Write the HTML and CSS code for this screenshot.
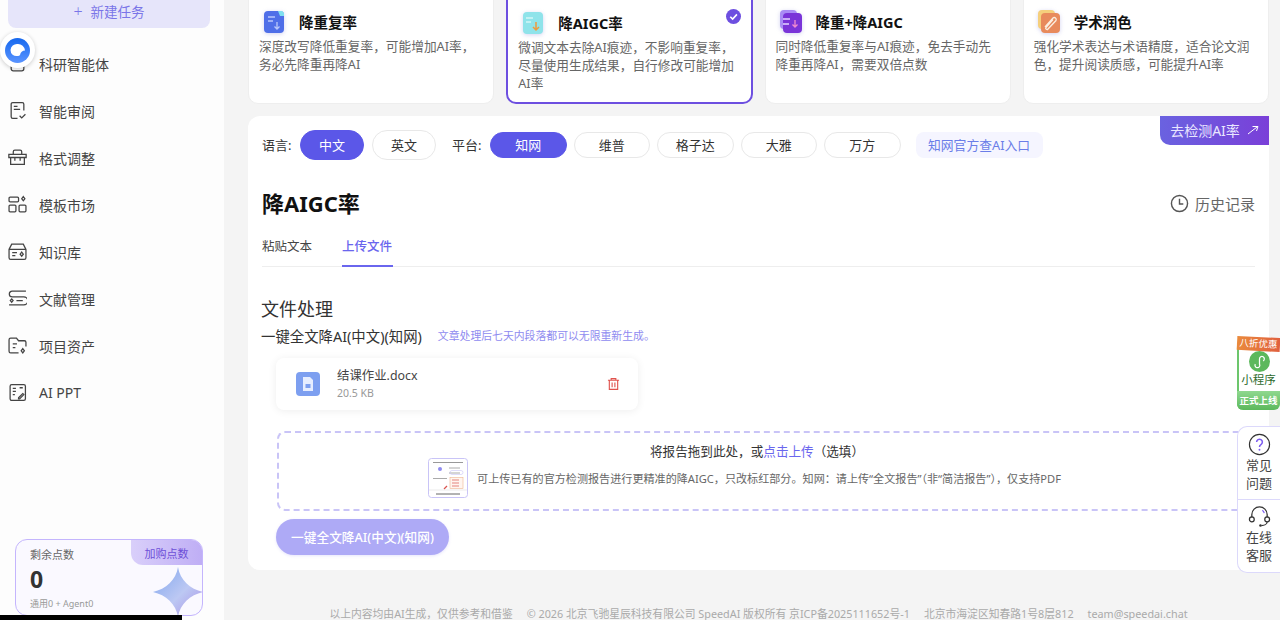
FILE: index.html
```html
<!DOCTYPE html>
<html lang="zh-CN">
<head>
    <meta charset="UTF-8">
    <meta name="viewport" content="width=device-width, initial-scale=1.0">
    <title>降AIGC率</title>
    <link rel="stylesheet" href="styles.css">
</head>
<body>
    <div class="app">
        <aside class="sidebar">
            <div class="new-task"><span class="plus">+</span>新建任务</div>
            <nav class="nav">
                <a class="nav-item">
                    <svg class="nav-icon" viewBox="0 0 18 18"><path d="M3 6h12v8a2 2 0 0 1-2 2H5a2 2 0 0 1-2-2zM1 6h16M6 10h6"/></svg>
                    科研智能体
                </a>
                <a class="nav-item">
                    <svg class="nav-icon" viewBox="0 0 18 18"><path d="M15 9V3a1.500 1.500 0 0 0-1.500-1.500H4.500A1.500 1.500 0 0 0 3 3v12a1.500 1.500 0 0 0 1.500 1.500H9M5.500 5h3.500M5.500 8h6M11 14l2 2 3.500-3.500"/></svg>
                    智能审阅
                </a>
                <a class="nav-item">
                    <svg class="nav-icon" viewBox="0 0 18 18"><path d="M5 6V3.500A1.500 1.500 0 0 1 6.500 2h5A1.500 1.500 0 0 1 13 3.500V6M.8 6h16.400v3H.8zM2.500 9v6.500h13V9M6.500 9v3M11.500 9v3"/></svg>
                    格式调整
                </a>
                <a class="nav-item">
                    <svg class="nav-icon" viewBox="0 0 18 18"><rect x="1" y="2" width="9" height="4.500" rx="1"/><rect x="1" y="9.500" width="6.500" height="6.500" rx="1"/><rect x="10.500" y="9.500" width="6.500" height="6.500" rx="1"/><path d="M14.500 1.500l1.500 2-1.500 2-1.500-2z"/></svg>
                    模板市场
                </a>
                <a class="nav-item">
                    <svg class="nav-icon" viewBox="0 0 18 18"><path d="M1 7l2.500-5h11L17 7v8a1.500 1.500 0 0 1-1.500 1.500h-13A1.500 1.500 0 0 1 1 15zM1 7h16M4 10h4.500M4 13h3M13 9.500l1.500 2-1.500 2-1.500-2z"/></svg>
                    知识库
                </a>
                <a class="nav-item">
                    <svg class="nav-icon" viewBox="0 0 18 18"><path d="M17 2H4a2.500 2.500 0 0 0 0 5.500h11a2.500 2.500 0 0 1 0 7.500H1M8 11h6M3.500 9.500l1.300 1.500-1.300 1.500L2.200 11z"/></svg>
                    文献管理
                </a>
                <a class="nav-item">
                    <svg class="nav-icon" viewBox="0 0 18 18"><path d="M10 16H2.500A1.500 1.500 0 0 1 1 14.500v-11A1.500 1.500 0 0 1 2.500 2H8l2 2.500h5.500A1.500 1.500 0 0 1 17 6v4M4.500 7.500h4M4.500 11h2.500M14 12l1.500 2-1.500 2-1.500-2z"/></svg>
                    项目资产
                </a>
                <a class="nav-item">
                    <svg class="nav-icon" viewBox="0 0 18 18"><rect x="2" y="1.500" width="14.500" height="15" rx="1.500"/><path d="M4.500 5h3M4.500 8h3M4.500 11h2M11 4.500h3M10 14l4-4 1 1-4 4h-1z"/></svg>
                    AI PPT
                </a>
            </nav>
            <div class="credits">
                <span class="buy-tag">加购点数</span>
                <div class="credits-label">剩余点数</div>
                <div class="credits-num">0</div>
                <div class="credits-sub">通用0 + Agent0</div>
                <svg class="credits-star" viewBox="0 0 50 50">
                    <defs>
                        <linearGradient id="starFill" x1="0" y1="0" x2="1" y2="1">
                            <stop offset="0" stop-color="#7fa6ee"/>
                            <stop offset="0.55" stop-color="#bcc8f3"/>
                            <stop offset="1" stop-color="#a88fe6"/>
                        </linearGradient>
                    </defs>
                    <path d="M25 0C27 13 37 22 50 25 37 28 27 37 25 50 23 37 13 28 0 25 13 22 23 13 25 0z" fill="url(#starFill)"/>
                </svg>
            </div>
        </aside>

        <main class="main">
            <section class="mode-grid">
                <div class="mode-card">
                    <div class="mode-head">
                        <svg class="mode-icon" viewBox="0 0 22 24"><rect x="1" y="1" width="20" height="22" rx="4" fill="#4f6fe8"/><path d="M15 1h4l2 2v3h-4z" fill="#7fe0f0"/><path d="M5 7h7M5 11h5" stroke="#b9c8fb" stroke-width="1.500"/><path d="M14 12v7M11.500 16.500l2.500 2.500 2.500-2.500" stroke="#b9c8fb" stroke-width="1.300" fill="none"/></svg>
                        <h3 class="mode-title">降重复率</h3>
                    </div>
                    <p class="mode-desc">深度改写降低重复率，可能增加AI率，务必先降重再降AI</p>
                </div>
                <div class="mode-card active">
                    <div class="mode-head">
                        <svg class="mode-icon" viewBox="0 0 22 24"><rect x="1" y="1" width="20" height="22" rx="4" fill="#8fe3ea"/><path d="M4 7h7M4 11h5" stroke="#d4f6f8" stroke-width="1.500"/><path d="M14 11v8M11 16l3 3 3-3" stroke="#ef9b3d" stroke-width="1.500" fill="none"/></svg>
                        <h3 class="mode-title">降AIGC率</h3>
                    </div>
                    <p class="mode-desc">微调文本去除AI痕迹，不影响重复率，尽量使用生成结果，自行修改可能增加AI率</p>
                    <svg class="mode-check" viewBox="0 0 14 14"><circle cx="7" cy="7" r="7" fill="#6d4fe0"/><path d="M4 7.200l2.200 2.200L10.200 5" stroke="#fff" stroke-width="1.500" fill="none"/></svg>
                </div>
                <div class="mode-card">
                    <div class="mode-head">
                        <svg class="mode-icon" viewBox="0 0 22 24"><rect x="0" y="0" width="17" height="19" rx="4" fill="#a98cf5"/><rect x="3" y="3" width="19" height="20" rx="4" fill="#7a34d8"/><path d="M3 9h7M3 14h6" stroke="#e3d6ff" stroke-width="1.500"/><path d="M15 10v7M12.500 14.500l2.500 2.500 2.500-2.500" stroke="#f18bd0" stroke-width="1.300" fill="none"/></svg>
                        <h3 class="mode-title">降重+降AIGC</h3>
                    </div>
                    <p class="mode-desc">同时降低重复率与AI痕迹，免去手动先降重再降AI，需要双倍点数</p>
                </div>
                <div class="mode-card">
                    <div class="mode-head">
                        <svg class="mode-icon" viewBox="0 0 22 24"><rect x="0" y="0" width="17" height="19" rx="4" fill="#f5cf7c"/><rect x="3" y="3" width="19" height="20" rx="4" fill="#e88a5c"/><path d="M7 17L15 8a2 2 0 0 1 3 2.500L10 19a1.200 1.200 0 0 1-2-1.500l7-8" stroke="#fbeee0" stroke-width="1.300" fill="none"/></svg>
                        <h3 class="mode-title">学术润色</h3>
                    </div>
                    <p class="mode-desc">强化学术表达与术语精度，适合论文润色，提升阅读质感，可能提升AI率</p>
                </div>
            </section>

            <section class="panel">
                <a class="detect-tag">去检测AI率
                    <svg class="detect-arrow" viewBox="0 0 12 10"><path d="M1 9l9-7M5.500 1.500H11L9.500 6" stroke="#fff" stroke-width="1" fill="none"/></svg>
                </a>
                <div class="filters">
                    <span class="filter-label">语言:</span>
                    <span class="pill pill-lg selected">中文</span>
                    <span class="pill pill-lg">英文</span>
                    <span class="filter-label platform-label">平台:</span>
                    <span class="pill selected">知网</span>
                    <span class="pill">维普</span>
                    <span class="pill">格子达</span>
                    <span class="pill">大雅</span>
                    <span class="pill">万方</span>
                    <a class="official-link">知网官方查AI入口</a>
                </div>
                <div class="title-row">
                    <h1 class="page-title">降AIGC率</h1>
                    <a class="history">
                        <svg class="history-icon" viewBox="0 0 20 20"><circle cx="10" cy="10" r="8.500"/><path d="M10 5v5.500h4"/></svg>
                        历史记录
                    </a>
                </div>
                <div class="tabs">
                    <span class="tab">粘贴文本</span>
                    <span class="tab active">上传文件</span>
                </div>
                <h2 class="section-title">文件处理</h2>
                <div class="subtitle-row">
                    <span class="subtitle">一键全文降AI(中文)(知网)</span>
                    <span class="hint">文章处理后七天内段落都可以无限重新生成。</span>
                </div>
                <div class="file-card">
                    <svg class="file-icon" viewBox="0 0 24 24"><rect width="24" height="24" rx="4" fill="#7d9ff0"/><path d="M7 5h7l3 3v11H7z" fill="#e6edff"/><rect x="9.500" y="12" width="5" height="4" fill="#7d9ff0"/></svg>
                    <div class="file-info">
                        <div class="file-name">结课作业.docx</div>
                        <div class="file-size">20.5 KB</div>
                    </div>
                    <svg class="trash" viewBox="0 0 14 14"><path d="M1 3h12M4.500 3V1.200h5V3M2.500 3v9.800h9V3M5.500 5.500v5M8.500 5.500v5"/></svg>
                </div>
                <div class="dropzone">
                    <div class="drop-title">将报告拖到此处，或<span class="drop-link">点击上传</span>（选填）</div>
                    <div class="drop-body">
                        <svg class="report-thumb" viewBox="0 0 40 40">
                            <rect x=".5" y=".5" width="39" height="39" rx="3" fill="#fff" stroke="#c9c4f7"/>
                            <path d="M5 4.500h30" stroke="#999"/>
                            <path d="M21 10h11M21 15h11M5 20.500h14" stroke="#aaa"/>
                            <rect x="22" y="12.500" width="13" height="4" rx="2" fill="none" stroke="#c9c4f7" stroke-width=".6"/>
                            <circle cx="12" cy="11" r="2" fill="#8f8bf0"/>
                            <rect x="22" y="19.500" width="13" height="11" fill="#fff5ef" stroke="#eeb48f" stroke-width=".6"/>
                            <path d="M24 22h7M24 25h7M24 28h7" stroke="#d9534f" stroke-width=".7"/>
                            <path d="M19 28l-3 3" stroke="#d9534f" stroke-width="1.200"/>
                            <path d="M1 32h38" stroke="#ddd" stroke-width=".6"/>
                            <path d="M8 36h24" stroke="#666"/>
                        </svg>
                        <span class="drop-desc">可上传已有的官方检测报告进行更精准的降AIGC，只改标红部分。知网：请上传“全文报告”（非“简洁报告”），仅支持PDF</span>
                    </div>
                </div>
                <button class="submit">一键全文降AI(中文)(知网)</button>
            </section>

            <footer class="footer">
                <span>以上内容均由AI生成，仅供参考和借鉴</span>
                <span>© 2026 北京飞驰星辰科技有限公司 SpeedAI 版权所有 京ICP备2025111652号-1</span>
                <span>北京市海淀区知春路1号8层812</span>
                <span>team@speedai.chat</span>
            </footer>
        </main>
    </div>

    <div class="float-logo">
        <svg class="float-logo-mark" viewBox="0 0 25 25">
            <defs>
                <linearGradient id="logoFill" x1="0" y1="0" x2="0" y2="1">
                    <stop offset="0" stop-color="#1668ee"/>
                    <stop offset="1" stop-color="#5a94ff"/>
                </linearGradient>
            </defs>
            <circle cx="12.500" cy="12.500" r="12.500" fill="url(#logoFill)"/>
            <path d="M12.500 6a7 7 0 0 1 7.500 6.500c-2.500 0-4.500 1.500-5 4.500-.5.800-1.500 1-2.500 1A6 6 0 0 1 5.500 12 6.500 6.500 0 0 1 12.500 6z" fill="#fff"/>
        </svg>
    </div>
    <div class="bottom-bar"></div>

    <div class="mini-app">
        <div class="mini-ribbon">八折优惠</div>
        <svg class="mini-icon" viewBox="0 0 20 20"><circle cx="10" cy="10" r="10" fill="#5cb85c"/><path d="M6 12.500a2.300 2.300 0 1 0 4 0V7.500a2.300 2.300 0 1 1 3.500 2" stroke="#fff" stroke-width="1.200" fill="none"/></svg>
        <div class="mini-text">小程序</div>
        <div class="mini-foot">正式上线</div>
    </div>

    <div class="help-box">
        <div class="help-item">
            <svg class="help-icon" viewBox="0 0 24 24"><circle cx="12" cy="12" r="10.500" fill="none" stroke="#333" stroke-width="1.200"/><path d="M9 9.500a3 3 0 1 1 4.500 2.600c-1 .6-1.500 1.100-1.500 2.400" fill="none" stroke="#7c5cf0" stroke-width="1.600"/><circle cx="12" cy="17.500" r="1" fill="#7c5cf0"/></svg>
            <span>常见<br>问题</span>
        </div>
        <div class="help-item">
            <svg class="help-icon" viewBox="0 0 24 24"><path d="M4 13V10a8 8 0 0 1 16 0v3" fill="none" stroke="#333" stroke-width="1.300"/><path d="M15 5.500a6 6 0 0 1 2 3" fill="none" stroke="#7c5cf0" stroke-width="1.200"/><circle cx="4" cy="15" r="2.500" fill="none" stroke="#333" stroke-width="1.300"/><circle cx="20" cy="15" r="2.500" fill="none" stroke="#333" stroke-width="1.300"/><path d="M20 17.500c0 2.500-3 4-6 4" fill="none" stroke="#333" stroke-width="1.300"/><circle cx="13" cy="21.500" r="1.300" fill="#333"/></svg>
            <span>在线<br>客服</span>
        </div>
    </div>
</body>
</html>
```

FILE: styles.css
```css
* {
    box-sizing: border-box;
}

html, body {
    margin: 0;
    padding: 0;
    height: 620px;
    overflow: hidden;
}

body {
    font-family: "Noto Sans", "Noto Sans CJK SC", sans-serif;
    background-color: #f4f4f4;
    color: #333;
    position: relative;
}

.app {
    display: flex;
    height: 620px;
}

/* sidebar */
.sidebar {
    width: 224px;
    flex-shrink: 0;
    background-color: #fdfdfd;
    display: flex;
    flex-direction: column;
    padding: 0 14px 4px 8px;
}

.new-task {
    height: 28px;
    padding-bottom: 6px;
    width: 202px;
    background-color: #e6e5fa;
    border-radius: 0 0 8px 8px;
    color: #7a75e8;
    font-size: 13.500px;
    display: flex;
    align-items: center;
    justify-content: center;
    flex-shrink: 0;
}

.plus {
    margin-right: 8px;
    font-size: 16px;
    font-weight: 300;
}

.nav {
    margin-top: 12px;
    display: flex;
    flex-direction: column;
}

.nav-item {
    height: 47px;
    display: flex;
    align-items: center;
    gap: 12px;
    font-size: 14px;
    color: #444;
}

.nav-icon {
    width: 19px;
    height: 19px;
    fill: none;
    stroke: #444;
    stroke-width: 1.200;
    flex-shrink: 0;
}

.credits {
    margin-top: auto;
    margin-left: 7px;
    width: 188px;
    height: 77px;
    border: 1px solid #c4b5fd;
    border-radius: 12px;
    background-color: #faf9ff;
    position: relative;
    overflow: hidden;
    padding: 6px 14px;
    flex-shrink: 0;
}

.buy-tag {
    position: absolute;
    top: 0;
    right: 0;
    width: 71px;
    height: 25px;
    background: linear-gradient(90deg, #d9cffa, #bfaef5);
    border-bottom-left-radius: 12px;
    color: #6d4fd8;
    font-size: 11px;
    display: flex;
    align-items: center;
    justify-content: center;
}

.credits-label {
    font-size: 11px;
    line-height: 18px;
    color: #666;
}

.credits-num {
    font-size: 23px;
    font-weight: 700;
    line-height: 31px;
    color: #333;
}

.credits-sub {
    margin-top: 2px;
    font-size: 9px;
    line-height: 14px;
    color: #999;
}

.credits-star {
    position: absolute;
    right: -1px;
    bottom: -2px;
    width: 50px;
    height: 50px;
    filter: blur(0.6px);
}

.float-logo {
    position: absolute;
    left: 0;
    top: 32px;
    width: 35px;
    height: 36px;
    background-color: #fff;
    border-radius: 50%;
    box-shadow: 0 1px 4px rgba(0, 0, 0, 0.2);
    display: flex;
    align-items: center;
    justify-content: center;
}

.float-logo-mark {
    width: 25px;
    height: 25px;
}

.bottom-bar {
    position: absolute;
    left: 0;
    bottom: 0;
    width: 182px;
    height: 5px;
    background-color: #000;
}

/* main */
.main {
    flex: 1;
    min-width: 0;
    padding: 0 11px 0 24px;
}

.mode-grid {
    display: grid;
    grid-template-columns: repeat(4, 1fr);
    gap: 12px;
    margin-top: -10px;
}

.mode-card {
    height: 114px;
    background-color: #fff;
    border-radius: 10px;
    border: 1px solid #eee;
    padding: 15px 10px 0;
    position: relative;
}

.mode-card.active {
    border: 2px solid #6d4fe0;
}

.mode-head {
    display: flex;
    align-items: center;
    height: 31px;
}

.mode-icon {
    width: 22px;
    height: 24px;
    margin-left: 4px;
    margin-right: 14px;
    flex-shrink: 0;
    filter: drop-shadow(0 1px 2px rgba(110, 110, 210, 0.3));
}

.mode-title {
    margin: 0;
    font-size: 14.500px;
    font-weight: 700;
    color: #111;
}

.mode-desc {
    margin: 0;
    font-size: 12.700px;
    line-height: 18px;
    color: #666;
}

.mode-check {
    position: absolute;
    top: 17px;
    right: 10px;
    width: 15px;
    height: 15px;
}

.panel {
    margin-top: 12px;
    height: 454px;
    background-color: #fff;
    border-radius: 12px;
    padding: 14px 14px 0;
    position: relative;
}

.detect-tag {
    position: absolute;
    top: 0;
    right: 0;
    width: 109px;
    height: 29px;
    padding-bottom: 2px;
    background: linear-gradient(90deg, #6a62e0, #7a3fd8);
    border-bottom-left-radius: 10px;
    color: #e9e6ff;
    font-size: 14px;
    display: flex;
    align-items: center;
    justify-content: center;
    gap: 7px;
}

.detect-arrow {
    width: 12px;
    height: 10px;
}

.filters {
    display: flex;
    align-items: center;
    height: 30px;
    font-size: 13px;
}

.filter-label {
    color: #333;
    font-size: 13px;
    width: 38px;
    flex-shrink: 0;
    padding-bottom: 2px;
}

.platform-label {
    margin-left: 8px;
}

.pill {
    width: 76.500px;
    height: 26px;
    padding-bottom: 2px;
    border: 1px solid #e8e8e8;
    border-radius: 13px;
    display: flex;
    align-items: center;
    justify-content: center;
    margin-right: 7px;
    color: #333;
    background-color: #fff;
    flex-shrink: 0;
}

.pill-lg {
    width: 64px;
    height: 30px;
    border-radius: 15px;
    margin-right: 8px;
}

.pill.selected {
    background-color: #5b57e8;
    border-color: #5b57e8;
    color: #fff;
}

.official-link {
    margin-left: 8px;
    height: 26px;
    padding: 0 12.500px 2px;
    border-radius: 8px;
    background-color: #f5f5ff;
    color: #6a7de8;
    font-size: 12.800px;
    display: flex;
    align-items: center;
}

.title-row {
    margin-top: 26px;
    height: 36px;
    display: flex;
    align-items: center;
    justify-content: space-between;
}

.page-title {
    margin: -4px 0 0;
    font-size: 22px;
    font-weight: 700;
    color: #111;
}

.history {
    display: flex;
    align-items: center;
    gap: 6px;
    font-size: 15px;
    color: #666;
    margin-top: -2px;
}

.history-icon {
    width: 19px;
    height: 19px;
    fill: none;
    stroke: #555;
    stroke-width: 1.500;
}

.tabs {
    height: 45px;
    display: flex;
    gap: 29px;
    border-bottom: 1px solid #eee;
}

.tab {
    font-size: 12.500px;
    color: #444;
    padding-top: 14px;
    height: 45px;
    width: 51px;
    white-space: nowrap;
}

.tab.active {
    color: #6a66ee;
    font-weight: 500;
    border-bottom: 2px solid #6a66ee;
}

.section-title {
    margin: 29px 0 0 -1px;
    font-size: 18px;
    font-weight: 400;
    line-height: 26px;
    color: #333;
}

.subtitle-row {
    margin: 2px 0 0 -1px;
    height: 22px;
    display: flex;
    align-items: center;
    gap: 16px;
}

.subtitle {
    font-size: 14.400px;
    color: #333;
}

.hint {
    font-size: 10.850px;
    color: #8f8bf0;
}

.file-card {
    margin: 12px 0 0 14px;
    width: 362px;
    height: 52px;
    border-radius: 8px;
    background-color: #fff;
    box-shadow: 0 1px 8px rgba(0, 0, 0, 0.07);
    display: flex;
    align-items: center;
    padding: 0 18px 0 20px;
}

.file-icon {
    width: 24px;
    height: 24px;
    margin-right: 17px;
}

.file-info {
    flex: 1;
}

.file-name {
    font-size: 12.400px;
    line-height: 18px;
    color: #444;
}

.file-size {
    font-size: 10.500px;
    line-height: 16px;
    color: #999;
}

.trash {
    width: 13px;
    height: 14px;
    fill: none;
    stroke: #e0524d;
    stroke-width: 1.200;
}

.dropzone {
    margin: 21px 0 0 15px;
    height: 80px;
    border: 2px dashed #c9c4f7;
    border-radius: 8px;
    padding-top: 10px;
    display: flex;
    flex-direction: column;
    align-items: center;
}

.drop-title {
    font-size: 12.600px;
    line-height: 18px;
    color: #333;
    margin-right: 18px;
}

.drop-link {
    color: #6a66ee;
}

.drop-body {
    display: flex;
    align-items: center;
    gap: 9px;
    margin: -3px 43px 0 0;
    height: 40px;
}

.report-thumb {
    width: 40px;
    height: 40px;
    flex-shrink: 0;
}

.drop-desc {
    font-size: 11.100px;
    color: #666;
    white-space: nowrap;
}

.submit {
    display: block;
    margin: 8px 0 0 14px;
    width: 173px;
    height: 36px;
    padding: 0 0 2px;
    border: none;
    border-radius: 18px;
    background-color: #aeaaf6;
    color: #fff;
    font-family: inherit;
    font-size: 12.700px;
    font-weight: 500;
    box-shadow: 0 1px 3px rgba(174, 170, 246, 0.3);
}

.footer {
    margin-top: 36px;
    display: flex;
    justify-content: center;
    gap: 14px;
    font-size: 10.800px;
    line-height: 16px;
    color: #aaa;
    white-space: nowrap;
}

/* floating widgets on the right */
.mini-app {
    position: absolute;
    left: 1237px;
    top: 340px;
    width: 43px;
    height: 70px;
    background-color: #fff;
    border-left: 2px solid #6cc66c;
    border-radius: 6px;
    text-align: center;
}

.mini-ribbon {
    position: absolute;
    left: -2px;
    top: -3px;
    width: 43px;
    height: 14px;
    background: linear-gradient(90deg, #ea8a3c, #e0603f);
    color: #fff;
    font-size: 9.500px;
    line-height: 14px;
    white-space: nowrap;
    transform: rotate(3deg);
}

.mini-icon {
    display: block;
    width: 21px;
    height: 21px;
    margin: 11px auto 0 10px;
}

.mini-text {
    font-size: 11.500px;
    line-height: 16px;
    color: #2e6b2e;
    margin-left: -2px;
}

.mini-foot {
    position: absolute;
    left: -2px;
    bottom: 0;
    width: 43px;
    height: 19px;
    background: linear-gradient(180deg, #8fd88f, #5cb85c);
    border-radius: 0 0 6px 6px;
    color: #fff;
    font-size: 9.500px;
    font-weight: 700;
    line-height: 19px;
}

.help-box {
    position: absolute;
    left: 1237px;
    top: 426px;
    width: 43px;
    height: 147px;
    border: 1px solid #dcd9fb;
    border-right: none;
    border-radius: 10px 0 0 10px;
    background-color: #fff;
}

.help-item {
    height: 72px;
    display: flex;
    flex-direction: column;
    align-items: center;
    padding-top: 6px;
    font-size: 13px;
    line-height: 18px;
    color: #444;
    text-align: center;
}

.help-item + .help-item {
    border-top: 1px solid #dcd9fb;
    padding-top: 5px;
}

.help-icon {
    width: 23px;
    height: 23px;
    flex-shrink: 0;
}
```
